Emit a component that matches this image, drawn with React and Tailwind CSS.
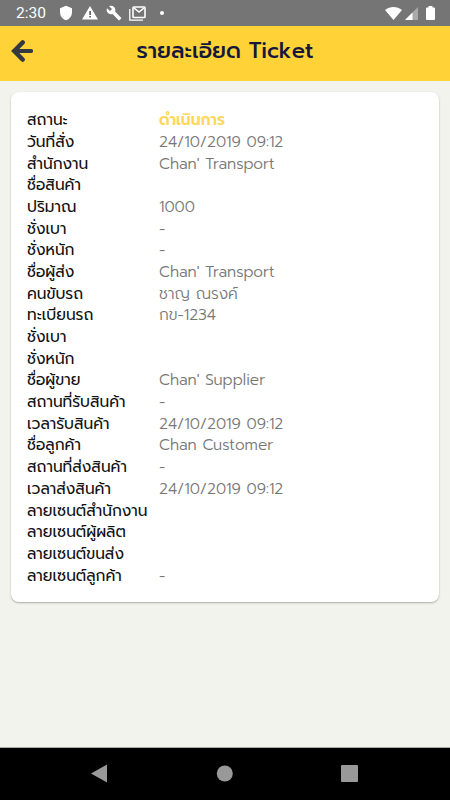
import React from 'react'
import { MdShield, MdBuild } from 'react-icons/md'

const rows = [
  { label: 'สถานะ', value: 'ดำเนินการ', status: true },
  { label: 'วันที่สั่ง', value: '24/10/2019 09:12' },
  { label: 'สำนักงาน', value: "Chan' Transport" },
  { label: 'ชื่อสินค้า', value: '' },
  { label: 'ปริมาณ', value: '1000' },
  { label: 'ชั่งเบา', value: '-' },
  { label: 'ชั่งหนัก', value: '-' },
  { label: 'ชื่อผู้ส่ง', value: "Chan' Transport" },
  { label: 'คนขับรถ', value: 'ชาญ ณรงค์' },
  { label: 'ทะเบียนรถ', value: 'กข-1234' },
  { label: 'ชั่งเบา', value: '' },
  { label: 'ชั่งหนัก', value: '' },
  { label: 'ชื่อผู้ขาย', value: "Chan' Supplier" },
  { label: 'สถานที่รับสินค้า', value: '-' },
  { label: 'เวลารับสินค้า', value: '24/10/2019 09:12' },
  { label: 'ชื่อลูกค้า', value: 'Chan Customer' },
  { label: 'สถานที่ส่งสินค้า', value: '-' },
  { label: 'เวลาส่งสินค้า', value: '24/10/2019 09:12' },
  { label: 'ลายเซนต์สำนักงาน', value: '' },
  { label: 'ลายเซนต์ผู้ผลิต', value: '' },
  { label: 'ลายเซนต์ขนส่ง', value: '' },
  { label: 'ลายเซนต์ลูกค้า', value: '-' },
]

const StatusBar = () => {
  return (
    <div className="h-[26px] bg-[#757575] flex items-center text-white pl-4 pr-[15px]">
      <span className="w-[42px] pt-[2px] text-[15.5px] leading-none font-normal font-['Roboto',sans-serif]">2:30</span>
      <MdShield className="w-4 h-4" />
      <svg viewBox="0 0 16 14" className="w-4 h-[14px] ml-2">
        <path d="M8 0l8 13.500H0z" fill="white" />
        <path d="M7.300 5h1.600v4H7.300zM7.300 10h1.600v1.600H7.300z" fill="#555" />
      </svg>
      <MdBuild className="w-4 h-4 ml-2" />
      <svg viewBox="0 0 17 15" className="w-[17px] h-[15px] ml-[7px]" fill="none" stroke="white">
        <path d="M.8 3v11.200H14" strokeWidth="1.300" />
        <rect x="4" y="1" width="12" height="10.500" rx=".8" strokeWidth="1.600" />
        <path d="M5 2l5 4 5-4" strokeWidth="1.600" />
      </svg>
      <span className="w-1 h-1 rounded-full bg-white ml-[14px]" />

      <div className="ml-auto flex items-center">
        <svg viewBox="0 0 17 13" className="w-[17px] h-[13px]" fill="white">
          <path d="M0 3C5-1 12-1 17 3L8.500 13z" />
        </svg>
        <svg viewBox="0 0 13 13" className="w-[13px] h-[13px] mt-px ml-[3px]">
          <path d="M13 0v13H0z" fill="#aaa" />
          <path d="M7.500 5.500V13H0z" fill="white" />
        </svg>
        <svg viewBox="0 0 9 14" className="w-[9px] h-[14px] ml-2" fill="white">
          <path d="M2.500 0h4v1.500H8a1 1 0 0 1 1 1V13a1 1 0 0 1-1 1H1a1 1 0 0 1-1-1V2.500a1 1 0 0 1 1-1h1.500z" />
        </svg>
      </div>
    </div>
  )
}

const App = () => {
  return (
    <div className="w-[450px] h-[800px] flex flex-col bg-[#f3f3ee] overflow-hidden font-['Prompt','Lato','Noto_Sans_Thai',sans-serif]">
      <StatusBar />

      <div className="h-[55px] bg-[#ffd337] flex items-center px-[11px]">
        <svg viewBox="0 0 22 22" className="w-[22px] h-[22px] -mt-[5px]" fill="none" stroke="#333a3f" strokeWidth="4.600" strokeLinecap="round">
          <path d="M11.600 2.500 3.300 11l8.300 8.500" />
          <path d="M4 11h16" strokeWidth="4.200" />
        </svg>
        <h1 className="flex-1 -mt-1.5 text-center text-[21.8px] leading-none font-medium text-[#14183a] pr-[22px]">รายละเอียด Ticket</h1>
      </div>

      <div className="mx-[11px] mt-[11px] h-[510px] bg-white rounded-lg shadow-[0_1px_2px_rgba(0,0,0,0.3)] px-4 pt-[17px]">
        {rows.map((row, i) => (
          <div key={i} className="flex h-[21.7px] items-center text-[15.4px] leading-none whitespace-nowrap">
            <span className="w-[132px] text-[#111]">{row.label}</span>
            {row.status ? (
              <span className="font-semibold text-[#ffd75a]">{row.value}</span>
            ) : (
              <span className="font-light text-[#777]">{row.value}</span>
            )}
          </div>
        ))}
      </div>

      <div className="mt-auto h-[53px] bg-black border-t border-[#aaa] flex items-center">
        <svg viewBox="0 0 450 52" className="w-full h-[52px]" fill="#999">
          <path d="M91 25.500 107 16.500v18z" />
          <circle cx="224.800" cy="25.500" r="8" />
          <rect x="341" y="17" width="17" height="17" rx="1" />
        </svg>
      </div>
    </div>
  )
}

export default App
